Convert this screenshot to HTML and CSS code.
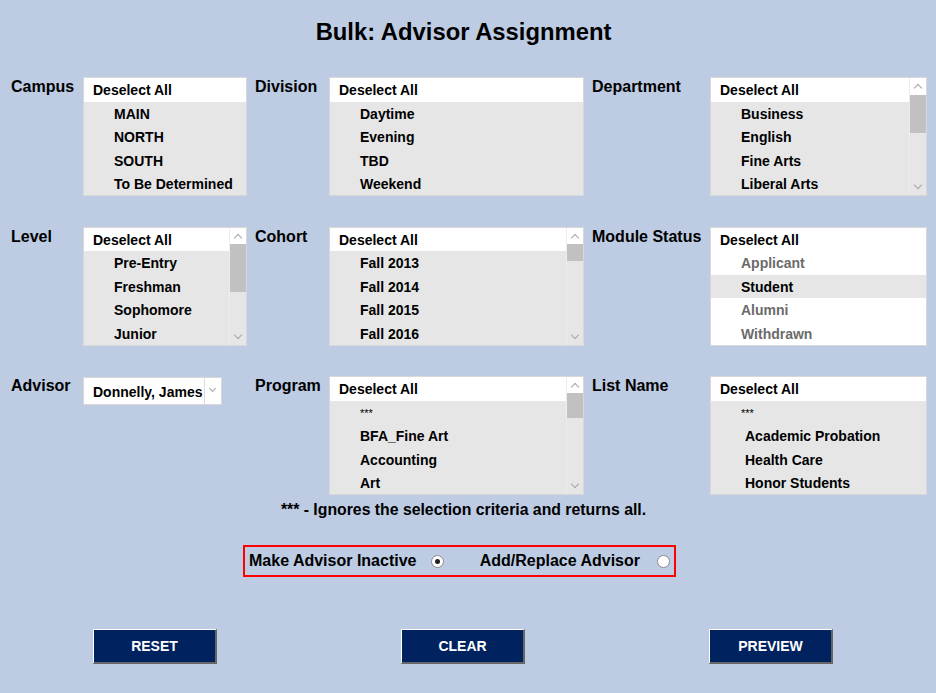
FILE: index.html
```html
<!DOCTYPE html>
<html lang="en">
<head>
<meta charset="utf-8">
<title>Bulk: Advisor Assignment</title>
<link rel="stylesheet" href="styles.css">
</head>
<body>
<div class="page">
  <h1 class="title">Bulk: Advisor Assignment</h1>

  <div class="filters">
    <div class="label">Campus</div>
    <div class="list">
      <div class="head">Deselect All</div>
      <div class="item">MAIN</div>
      <div class="item">NORTH</div>
      <div class="item">SOUTH</div>
      <div class="item">To Be Determined</div>
    </div>

    <div class="label gap">Division</div>
    <div class="list">
      <div class="head">Deselect All</div>
      <div class="item">Daytime</div>
      <div class="item">Evening</div>
      <div class="item">TBD</div>
      <div class="item">Weekend</div>
    </div>

    <div class="label gap">Department</div>
    <div class="list">
      <div class="head">Deselect All</div>
      <div class="item">Business</div>
      <div class="item">English</div>
      <div class="item">Fine Arts</div>
      <div class="item">Liberal Arts</div>
      <div class="scrollbar"><span class="up"></span><span class="thumb" style="top:17px;height:38px"></span><span class="down"></span></div>
    </div>

    <div class="label">Level</div>
    <div class="list">
      <div class="head">Deselect All</div>
      <div class="item">Pre-Entry</div>
      <div class="item">Freshman</div>
      <div class="item">Sophomore</div>
      <div class="item">Junior</div>
      <div class="scrollbar"><span class="up"></span><span class="thumb" style="top:16px;height:48px"></span><span class="down"></span></div>
    </div>

    <div class="label gap">Cohort</div>
    <div class="list">
      <div class="head">Deselect All</div>
      <div class="item">Fall 2013</div>
      <div class="item">Fall 2014</div>
      <div class="item">Fall 2015</div>
      <div class="item">Fall 2016</div>
      <div class="scrollbar"><span class="up"></span><span class="thumb" style="top:16px;height:17px"></span><span class="down"></span></div>
    </div>

    <div class="label gap">Module Status</div>
    <div class="list white">
      <div class="head">Deselect All</div>
      <div class="item dim">Applicant</div>
      <div class="item selected">Student</div>
      <div class="item dim">Alumni</div>
      <div class="item dim">Withdrawn</div>
    </div>

    <div class="label">Advisor</div>
    <div class="cell">
      <div class="select">
        <span class="select-text">Donnelly, James</span>
        <span class="select-arrow"></span>
      </div>
    </div>

    <div class="label gap">Program</div>
    <div class="list">
      <div class="head">Deselect All</div>
      <div class="item stars">***</div>
      <div class="item">BFA_Fine Art</div>
      <div class="item">Accounting</div>
      <div class="item">Art</div>
      <div class="scrollbar"><span class="up"></span><span class="thumb" style="top:16px;height:25px"></span><span class="down"></span></div>
    </div>

    <div class="label gap">List Name</div>
    <div class="list">
      <div class="head">Deselect All</div>
      <div class="item stars">***</div>
      <div class="item wide">Academic Probation</div>
      <div class="item wide">Health Care</div>
      <div class="item wide">Honor Students</div>
    </div>
  </div>

  <p class="note">*** - Ignores the selection criteria and returns all.</p>

  <div class="mode-row">
    <div class="mode">
      <label class="opt"><span>Make Advisor Inactive</span><span class="radio checked"></span></label>
      <label class="opt second"><span>Add/Replace Advisor</span><span class="radio"></span></label>
    </div>
  </div>

  <div class="actions">
    <button class="btn">RESET</button>
    <button class="btn">CLEAR</button>
    <button class="btn">PREVIEW</button>
  </div>
</div>
</body>
</html>
```

FILE: styles.css
```css
html, body {
  margin: 0;
  padding: 0;
  background: #bdcbe3;
  font-family: "Liberation Sans", Arial, sans-serif;
  color: #000;
}

.page {
  width: 927px;
  height: 693px;
  overflow: hidden;
}

.title {
  margin: 0;
  padding-top: 18px;
  height: 28px;
  line-height: 28px;
  font-size: 23.8px;
  font-weight: bold;
  text-align: center;
  margin-bottom: 31px;
}

.filters {
  display: grid;
  grid-template-columns: 72px 164px 82px 255px 126px 217px;
  grid-template-rows: 119px 119px 119px;
  row-gap: 30.5px;
  padding-left: 11px;
}

.label {
  font-size: 16px;
  font-weight: bold;
  line-height: 18px;
  padding-top: 1px;
}

.label.gap {
  padding-left: 8px;
}

.list {
  position: relative;
  box-sizing: border-box;
  border: 1px solid #d8d8d8;
  background: #e6e6e6;
  overflow: hidden;
  font-size: 14px;
  font-weight: bold;
}

.list.white {
  background: #fff;
}

.head {
  height: 23.5px;
  line-height: 24px;
  background: #fff;
  padding-left: 9px;
}

.item {
  height: 23.6px;
  line-height: 24.5px;
  padding-left: 30px;
}

.item.wide {
  padding-left: 34px;
}

.item.stars {
  font-weight: normal;
  font-size: 11px;
}

.item.dim {
  color: #6b6b6b;
}

.item.selected {
  background: #e6e6e6;
}

.scrollbar {
  position: absolute;
  top: 0;
  right: 0;
  bottom: 0;
  width: 16px;
  border-left: 1px solid #ededed;
}

.thumb {
  position: absolute;
  left: 0;
  right: 0;
  background: #c1c1c1;
}

.up, .down {
  position: absolute;
  left: 5px;
  width: 5px;
  height: 5px;
  border-left: 1px solid #a6a6a6;
  border-top: 1px solid #a6a6a6;
}

.up {
  top: 7px;
  transform: rotate(45deg);
}

.down {
  bottom: 7px;
  transform: rotate(225deg);
}

.cell {
  padding-top: 1px;
}

.select {
  box-sizing: border-box;
  width: 139px;
  height: 28px;
  background: #fff;
  border: 1px solid #d8d8d8;
  display: flex;
  font-size: 14px;
  font-weight: bold;
}

.select-text {
  flex: 1;
  padding-left: 9px;
  line-height: 28px;
  white-space: nowrap;
}

.select-arrow {
  position: relative;
  width: 16px;
  border-left: 1px solid #dcdcdc;
}

.select-arrow::after {
  content: "";
  position: absolute;
  left: 5px;
  top: 8px;
  width: 4px;
  height: 4px;
  border-right: 1px solid #a6a6a6;
  border-bottom: 1px solid #a6a6a6;
  transform: rotate(45deg);
}

.note {
  margin: 6px 0 0;
  font-size: 15.8px;
  font-weight: bold;
  line-height: 18px;
  text-align: center;
}

.mode-row {
  display: flex;
  padding-left: 243px;
  margin-top: 26px;
}

.mode {
  box-sizing: border-box;
  width: 433px;
  height: 32px;
  border: 2px solid #ff0000;
  display: flex;
  align-items: center;
  padding: 0 4px;
  font-size: 16px;
  font-weight: bold;
}

.opt {
  display: flex;
  align-items: center;
}

.opt.second {
  margin-left: auto;
}

.radio {
  box-sizing: border-box;
  width: 13px;
  height: 13px;
  border-radius: 50%;
  border: 1px solid #8a8a8a;
  background: #fff;
  margin-left: 15px;
  position: relative;
}

.opt.second .radio {
  margin-left: 17px;
}

.radio.checked::after {
  content: "";
  position: absolute;
  left: 3px;
  top: 3px;
  width: 5px;
  height: 5px;
  border-radius: 50%;
  background: #222;
}

.actions {
  display: flex;
  gap: 184px;
  padding-left: 93px;
  margin-top: 52px;
}

.btn {
  box-sizing: border-box;
  width: 124px;
  height: 35px;
  background: #002360;
  color: #fff;
  font-family: "Liberation Sans", Arial, sans-serif;
  font-size: 14px;
  font-weight: bold;
  border-top: 1px solid #fff;
  border-left: 1px solid #fff;
  border-right: 2px solid #666;
  border-bottom: 2px solid #666;
  padding: 0;
}
```
